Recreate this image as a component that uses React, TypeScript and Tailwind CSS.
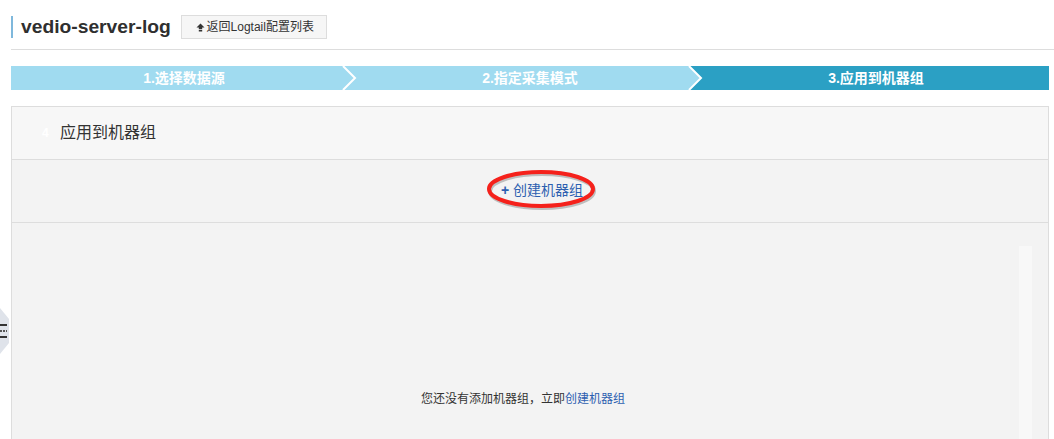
import React from 'react';

const font = { fontFamily: '"Liberation Sans", "Noto Sans CJK SC", sans-serif' };

const steps = [
  { label: '1.选择数据源', active: false },
  { label: '2.指定采集模式', active: false },
  { label: '3.应用到机器组', active: true },
];

const App = () => {
  return (
    <div
      className="relative h-[439px] w-[1054px] overflow-hidden bg-white pl-[11px] text-[#333]"
      style={font}
    >
      <header className="flex h-[50px] items-start border-b border-[#ddd] pt-[15px]">
        <h1 className="mt-px flex h-[22px] items-center border-l-2 border-[#7fb8dc] pl-2 text-[19.25px] font-bold text-[#2f2f2f]">
          vedio-server-log
        </h1>
        <button className="ml-[10px] flex h-6 w-[146px] items-center justify-center gap-[2px] border border-[#ddd] bg-[#f6f6f6] pl-[2px] text-xs text-[#333]">
          <svg width="9" height="9" viewBox="0 0 9 9" fill="#333">
            <path d="M4.5 0.5 8.5 4.5H6.2V6.2H2.8V4.5H0.5ZM2.8 7H6.2V8.4H2.8Z" />
          </svg>
          返回Logtail配置列表
        </button>
      </header>

      <div className="mt-4 flex h-6 w-[1038px]">
        {steps.map((step, i) => (
          <div
            key={step.label}
            className={`relative flex h-6 flex-1 items-center justify-center text-sm font-bold text-white ${
              step.active ? 'bg-[#2ba0c4]' : 'bg-[#a0dbf0]'
            }`}
          >
            {step.label}
            {i < 2 && (
              <svg className="absolute right-0 top-0" width="16" height="24" viewBox="0 0 16 24">
                <rect width="16" height="24" fill={i === 1 ? '#2ba0c4' : '#a0dbf0'} />
                <path d="M0 0H2L14 12 2 24H0Z" fill="#a0dbf0" />
                <path d="M2 0 14 12 2 24" fill="none" stroke="#fff" strokeWidth="2" />
              </svg>
            )}
          </div>
        ))}
      </div>

      <section className="mt-4 w-[1038px] border border-[#ddd] bg-[#f3f3f3]">
        <div className="flex h-[53px] items-center border-b border-[#ddd] bg-[#f7f7f7] pl-[30px] text-base text-[#333]">
          <span className="w-[18px] text-xs font-bold text-white">4</span>
          应用到机器组
        </div>
        <div className="flex h-[63px] items-center justify-center border-b border-[#ddd] pb-[2px] pl-[24px] text-sm text-[#2d60b0]">
          <a className="relative flex items-center gap-[4px]">
            <span className="text-sm font-bold">+</span>
            创建机器组
            <svg
              className="absolute -left-[15px] -top-[11px]"
              width="116"
              height="44"
              viewBox="0 0 116 44"
            >
              <ellipse
                cx="56"
                cy="22"
                rx="52"
                ry="17"
                fill="none"
                stroke="#8a8a8a"
                strokeOpacity="0.5"
                strokeWidth="4"
              />
              <ellipse
                cx="55"
                cy="20"
                rx="52"
                ry="17"
                fill="none"
                stroke="#f5211b"
                strokeWidth="4"
              />
            </svg>
          </a>
        </div>
        <div className="relative h-[220px] pr-[14px] pt-[168px] text-center text-xs text-[#333]">
          您还没有添加机器组，立即<a className="text-[#2d60b0]">创建机器组</a>
          <div className="absolute right-[16px] top-[23px] h-[200px] w-[13px] bg-[#f8f8f8]" />
        </div>
      </section>

      <div className="absolute left-0 top-[308px] flex h-[46px] w-[9px] flex-col items-start justify-center gap-[4px] bg-[#dfe3ea] [clip-path:polygon(0_0,100%_24%,100%_76%,0_100%)]">
        <span className="h-[2px] w-[7px] bg-[#333]" />
        <span className="h-[2px] w-[7px] bg-[repeating-linear-gradient(90deg,#555_0,#555_2px,transparent_2px,transparent_3px)]" />
        <span className="h-[2px] w-[7px] bg-[#333]" />
      </div>
    </div>
  );
};

export default App;
